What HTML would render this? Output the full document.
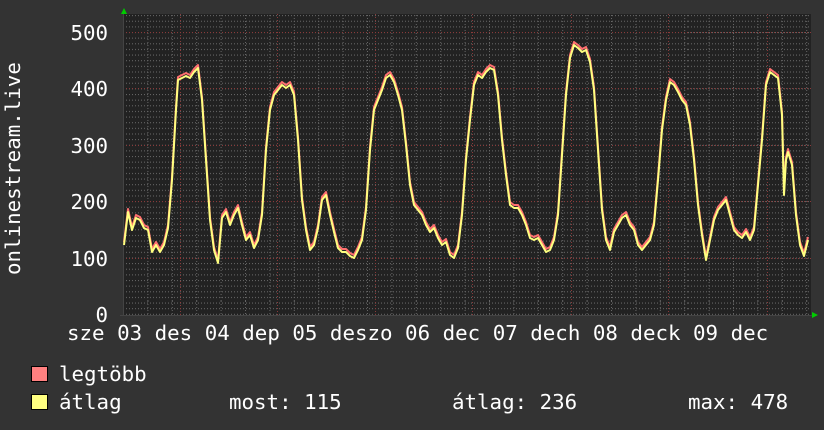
<!DOCTYPE html>
<html><head><style>
html,body{margin:0;padding:0;background:#333;}
svg{display:block}
text{font-family:"DejaVu Sans Mono","Liberation Mono",monospace;fill:#fff}
</style></head><body>
<svg width="824" height="430" viewBox="0 0 824 430" xmlns="http://www.w3.org/2000/svg">
<rect width="824" height="430" fill="#333"/>
<rect x="123" y="14" width="688" height="301" fill="#222"/>
<defs>
<pattern id="hmin" x="0" y="32" width="688" height="5.636" patternUnits="userSpaceOnUse">
<line x1="0" y1="0.5" x2="688" y2="0.5" stroke="#666" stroke-width="1" stroke-dasharray="1,2"/>
</pattern>
<pattern id="vmin" x="123" y="0" width="24.4" height="301" patternUnits="userSpaceOnUse">
<line x1="0.5" y1="0" x2="0.5" y2="301" stroke="#666" stroke-width="1" stroke-dasharray="1,2"/>
</pattern>
</defs>
<rect x="123" y="14" width="688" height="301" fill="url(#hmin)"/>
<rect x="123" y="14" width="688" height="301" fill="url(#vmin)"/>
<g stroke="#8a3a3a" stroke-width="1" stroke-dasharray="1,2">
<line x1="123" y1="32.5" x2="811" y2="32.5"/>
<line x1="123" y1="88.5" x2="811" y2="88.5"/>
<line x1="123" y1="145.5" x2="811" y2="145.5"/>
<line x1="123" y1="201.5" x2="811" y2="201.5"/>
<line x1="123" y1="258.5" x2="811" y2="258.5"/>
<line x1="180.5" y1="14" x2="180.5" y2="315"/>
<line x1="277.5" y1="14" x2="277.5" y2="315"/>
<line x1="375.5" y1="14" x2="375.5" y2="315"/>
<line x1="472.5" y1="14" x2="472.5" y2="315"/>
<line x1="571.5" y1="14" x2="571.5" y2="315"/>
<line x1="668.5" y1="14" x2="668.5" y2="315"/>
<line x1="767.5" y1="14" x2="767.5" y2="315"/>
</g>
<line x1="123.5" y1="14" x2="123.5" y2="316" stroke="#444"/>
<line x1="120" y1="315.5" x2="812" y2="315.5" stroke="#444"/>
<polygon points="121,14 127,14 124,8" fill="#0c0"/>
<polygon points="812,312 812,318 818,315" fill="#0c0"/>
<g id="curve" fill="none" stroke-linejoin="round">
<polyline id="red" stroke="#ff7070" stroke-width="2" transform="translate(0,-3)" points="124,245 128,212 132,230 136,218 140,220 144,228 148,230 152,252 156,245 160,252 164,245 168,228 172,180 176,110 178,80 182,78 186,76 190,78 194,72 198,68 202,100 206,160 210,220 214,250 218,263 222,218 226,212 230,225 234,215 238,208 242,225 246,240 250,235 254,248 258,240 262,215 266,150 270,110 274,95 278,90 282,85 286,88 290,85 294,95 298,140 302,200 306,230 310,250 314,245 318,228 322,200 326,195 330,215 334,232 338,248 342,252 346,252 350,256 354,258 358,250 362,240 366,210 370,150 374,110 378,100 382,90 386,78 390,75 394,82 398,95 402,110 406,145 410,185 414,205 418,210 422,215 426,225 430,232 434,228 438,238 442,245 446,242 450,255 454,258 458,248 462,215 466,160 470,120 474,85 478,75 482,78 486,72 490,68 494,70 498,95 502,140 506,175 510,205 514,208 518,208 522,215 526,225 530,238 534,240 538,238 542,245 546,252 550,250 554,240 558,215 562,155 566,95 570,58 574,45 578,48 582,52 586,50 590,62 594,90 598,150 602,210 606,240 610,250 614,232 618,225 622,218 626,215 630,225 634,230 638,245 642,250 646,245 650,240 654,225 658,180 662,130 666,100 670,82 674,85 678,92 682,100 686,105 690,125 694,160 698,205 702,235 706,260 710,240 714,220 718,210 722,205 726,200 730,215 734,230 738,235 742,238 746,232 750,240 754,230 758,185 762,140 766,85 770,72 774,75 778,78 782,115 784,195 786,160 788,152 792,165 796,215 800,245 804,256 808,240"/>
<polyline stroke="#ffff80" stroke-width="2" points="124,245 128,212 132,230 136,218 140,220 144,228 148,230 152,252 156,245 160,252 164,245 168,228 172,180 176,110 178,80 182,78 186,76 190,78 194,72 198,68 202,100 206,160 210,220 214,250 218,263 222,218 226,212 230,225 234,215 238,208 242,225 246,240 250,235 254,248 258,240 262,215 266,150 270,110 274,95 278,90 282,85 286,88 290,85 294,95 298,140 302,200 306,230 310,250 314,245 318,228 322,200 326,195 330,215 334,232 338,248 342,252 346,252 350,256 354,258 358,250 362,240 366,210 370,150 374,110 378,100 382,90 386,78 390,75 394,82 398,95 402,110 406,145 410,185 414,205 418,210 422,215 426,225 430,232 434,228 438,238 442,245 446,242 450,255 454,258 458,248 462,215 466,160 470,120 474,85 478,75 482,78 486,72 490,68 494,70 498,95 502,140 506,175 510,205 514,208 518,208 522,215 526,225 530,238 534,240 538,238 542,245 546,252 550,250 554,240 558,215 562,155 566,95 570,58 574,45 578,48 582,52 586,50 590,62 594,90 598,150 602,210 606,240 610,250 614,232 618,225 622,218 626,215 630,225 634,230 638,245 642,250 646,245 650,240 654,225 658,180 662,130 666,100 670,82 674,85 678,92 682,100 686,105 690,125 694,160 698,205 702,235 706,260 710,240 714,220 718,210 722,205 726,200 730,215 734,230 738,235 742,238 746,232 750,240 754,230 758,185 762,140 766,85 770,72 774,75 778,78 782,115 784,195 786,160 788,152 792,165 796,215 800,245 804,256 808,240"/>
</g>
<g font-size="20.8" text-anchor="end">
<text x="108" y="40">500</text>
<text x="108" y="96">400</text>
<text x="108" y="153">300</text>
<text x="108" y="209">200</text>
<text x="108" y="266">100</text>
<text x="108" y="322">0</text>
</g>
<text x="67" y="340" font-size="20.8" xml:space="preserve">sze 03 des 04 dep 05 deszo 06 dec 07 dech 08 deck 09 dec</text>
<text transform="translate(20,275) rotate(-90)" font-size="20.8">onlinestream.live</text>
<rect x="31.5" y="366.5" width="16" height="15" fill="#ff8080" stroke="#000"/>
<rect x="31.5" y="394.5" width="16" height="15" fill="#ffff80" stroke="#000"/>
<g font-size="20.8">
<text x="59" y="381">legtöbb</text>
<text x="59" y="409">átlag</text>
<text x="229" y="409">most: 115</text>
<text x="452" y="409">átlag: 236</text>
<text x="688" y="409">max: 478</text>
</g>
</svg>
</body></html>
